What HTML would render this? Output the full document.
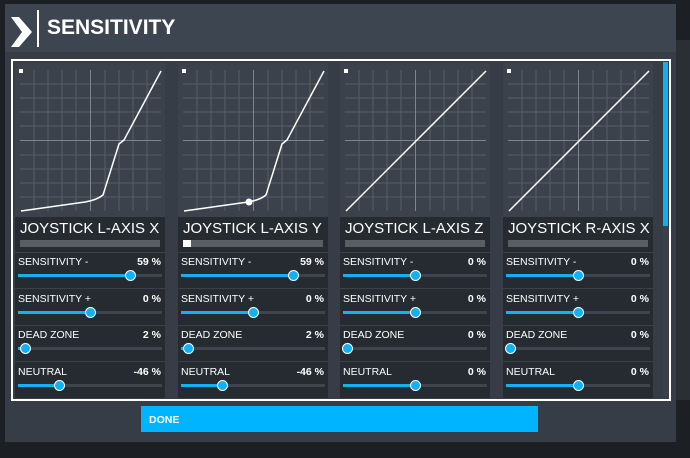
<!DOCTYPE html>
<html><head><meta charset="utf-8"><style>
*{margin:0;padding:0;box-sizing:border-box}
body{width:690px;height:458px;overflow:hidden;background:#1c2024;font-family:"Liberation Sans",sans-serif;position:relative}
.abs{position:absolute}
.dlg{left:5px;top:4px;width:671px;height:438px;background:#363d46}
.hdr{left:5px;top:4px;width:671px;height:48px;background:#3d4550}
.frame{left:11px;top:59px;width:660px;height:342px;border:2px solid #fff}
.card{top:63px;width:150px;height:335px;background:#262b31}
.graph{left:0;top:0;width:150px;height:154px;background:#3b424c}
.title{left:5px;top:157px;color:#fff;font-size:15px;white-space:nowrap}
.gbar{left:5px;top:177px;width:140px;height:7px;background:#595e65}
.sep{left:0;width:150px;height:1px;background:#3b414a}
.lbl{left:3px;color:#fff;font-size:10.5px;width:143px}
.lbl b{float:right;font-weight:bold}
.trk{left:3px;width:144px;height:3px;background:#3f454e}
.fill{left:0;top:0;height:3px;background:#12b2f2}
.knob{width:11px;height:11px;border-radius:50%;background:#12b2f2;border:1.5px solid #fff;top:-4px}
</style></head><body>
<div class="abs dlg"></div>
<div class="abs hdr"></div>
<svg class="abs" style="left:10px;top:8px" width="36" height="40"><polygon points="1,9 9,9 22,24 9,39 1,39 12,24" fill="#fff"/><rect x="27" y="2" width="2" height="37" fill="#fff"/></svg>
<div class="abs" style="left:47px;top:16px;color:#fff;font-size:21px;font-weight:bold">SENSITIVITY</div>
<div class="abs" style="left:676px;top:40px;width:14px;height:360px;background:#2a2f35"></div>
<div class="abs frame"></div>
<div class="abs" style="left:663px;top:62px;width:5px;height:335px;background:#3a414a"></div>
<div class="abs" style="left:663px;top:62px;width:5px;height:164px;background:#0fb0f0"></div>
<div class="abs" style="left:141px;top:406px;width:397px;height:26px;background:#00b4ff"></div>
<div class="abs" style="left:149px;top:414px;color:#fff;font-size:10.5px;font-weight:bold">DONE</div>

<svg width="0" height="0" style="position:absolute"><defs>
<g id="grid" stroke="#555d67" stroke-width="1">
<line x1="5" y1="21" x2="146" y2="21"/><line x1="5" y1="35" x2="146" y2="35"/><line x1="5" y1="49" x2="146" y2="49"/><line x1="5" y1="63" x2="146" y2="63"/><line x1="5" y1="92" x2="146" y2="92"/><line x1="5" y1="106" x2="146" y2="106"/><line x1="5" y1="120" x2="146" y2="120"/><line x1="5" y1="134" x2="146" y2="134"/>
<line x1="19" y1="7" x2="19" y2="148"/><line x1="33" y1="7" x2="33" y2="148"/><line x1="47" y1="7" x2="47" y2="148"/><line x1="61" y1="7" x2="61" y2="148"/><line x1="90" y1="7" x2="90" y2="148"/><line x1="104" y1="7" x2="104" y2="148"/><line x1="118" y1="7" x2="118" y2="148"/><line x1="132" y1="7" x2="132" y2="148"/>
<line x1="5" y1="77.5" x2="146" y2="77.5" stroke="#7d848d"/><line x1="75.5" y1="7" x2="75.5" y2="148" stroke="#7d848d"/>
<rect x="4" y="6" width="4" height="4" fill="#fff" stroke="none"/>
</g></defs></svg>

<!-- card 1 -->
<div class="abs card" style="left:15px">
<svg class="abs graph" width="150" height="154"><use href="#grid"/><path d="M6 148 L70 139 Q82 137 88 132 L104 81 L109 77 L146 8" fill="none" stroke="#fff" stroke-width="1.5"/></svg>
<div class="abs title">JOYSTICK L-AXIS X</div><div class="abs gbar"></div>
<div class="abs sep" style="top:189px"></div><div class="abs lbl" style="top:193px">SENSITIVITY -<b>59 %</b></div>
<div class="abs trk" style="top:211px"><div class="abs fill" style="width:112px"></div><div class="abs knob" style="left:107px"></div></div>
<div class="abs sep" style="top:225px"></div><div class="abs lbl" style="top:230px">SENSITIVITY +<b>0 %</b></div>
<div class="abs trk" style="top:248px"><div class="abs fill" style="width:72px"></div><div class="abs knob" style="left:67px"></div></div>
<div class="abs sep" style="top:262px"></div><div class="abs lbl" style="top:266px">DEAD ZONE<b>2 %</b></div>
<div class="abs trk" style="top:284px"><div class="abs fill" style="width:7px"></div><div class="abs knob" style="left:2px"></div></div>
<div class="abs sep" style="top:298px"></div><div class="abs lbl" style="top:303px">NEUTRAL<b>-46 %</b></div>
<div class="abs trk" style="top:321px"><div class="abs fill" style="width:41px"></div><div class="abs knob" style="left:36px"></div></div>
</div>
<!-- card 2 -->
<div class="abs card" style="left:178px">
<svg class="abs graph" width="150" height="154"><use href="#grid"/><path d="M6 148 L70 139 Q82 137 88 132 L104 81 L109 77 L146 8" fill="none" stroke="#fff" stroke-width="1.5"/><circle cx="71" cy="139" r="3.5" fill="#fff"/></svg>
<div class="abs title">JOYSTICK L-AXIS Y</div><div class="abs gbar"></div>
<div class="abs" style="left:5px;top:177px;width:8px;height:7px;background:#fff"></div>
<div class="abs sep" style="top:189px"></div><div class="abs lbl" style="top:193px">SENSITIVITY -<b>59 %</b></div>
<div class="abs trk" style="top:211px"><div class="abs fill" style="width:112px"></div><div class="abs knob" style="left:107px"></div></div>
<div class="abs sep" style="top:225px"></div><div class="abs lbl" style="top:230px">SENSITIVITY +<b>0 %</b></div>
<div class="abs trk" style="top:248px"><div class="abs fill" style="width:72px"></div><div class="abs knob" style="left:67px"></div></div>
<div class="abs sep" style="top:262px"></div><div class="abs lbl" style="top:266px">DEAD ZONE<b>2 %</b></div>
<div class="abs trk" style="top:284px"><div class="abs fill" style="width:7px"></div><div class="abs knob" style="left:2px"></div></div>
<div class="abs sep" style="top:298px"></div><div class="abs lbl" style="top:303px">NEUTRAL<b>-46 %</b></div>
<div class="abs trk" style="top:321px"><div class="abs fill" style="width:41px"></div><div class="abs knob" style="left:36px"></div></div>
</div>
<!-- card 3 -->
<div class="abs card" style="left:340px">
<svg class="abs graph" width="150" height="154"><use href="#grid"/><path d="M6 148 L146 8" fill="none" stroke="#fff" stroke-width="1.5"/></svg>
<div class="abs title">JOYSTICK L-AXIS Z</div><div class="abs gbar"></div>
<div class="abs sep" style="top:189px"></div><div class="abs lbl" style="top:193px">SENSITIVITY -<b>0 %</b></div>
<div class="abs trk" style="top:211px"><div class="abs fill" style="width:72px"></div><div class="abs knob" style="left:67px"></div></div>
<div class="abs sep" style="top:225px"></div><div class="abs lbl" style="top:230px">SENSITIVITY +<b>0 %</b></div>
<div class="abs trk" style="top:248px"><div class="abs fill" style="width:72px"></div><div class="abs knob" style="left:67px"></div></div>
<div class="abs sep" style="top:262px"></div><div class="abs lbl" style="top:266px">DEAD ZONE<b>0 %</b></div>
<div class="abs trk" style="top:284px"><div class="abs knob" style="left:-1px"></div></div>
<div class="abs sep" style="top:298px"></div><div class="abs lbl" style="top:303px">NEUTRAL<b>0 %</b></div>
<div class="abs trk" style="top:321px"><div class="abs fill" style="width:72px"></div><div class="abs knob" style="left:67px"></div></div>
</div>
<!-- card 4 -->
<div class="abs card" style="left:503px">
<svg class="abs graph" width="150" height="154"><use href="#grid"/><path d="M6 148 L146 8" fill="none" stroke="#fff" stroke-width="1.5"/></svg>
<div class="abs title">JOYSTICK R-AXIS X</div><div class="abs gbar"></div>
<div class="abs sep" style="top:189px"></div><div class="abs lbl" style="top:193px">SENSITIVITY -<b>0 %</b></div>
<div class="abs trk" style="top:211px"><div class="abs fill" style="width:72px"></div><div class="abs knob" style="left:67px"></div></div>
<div class="abs sep" style="top:225px"></div><div class="abs lbl" style="top:230px">SENSITIVITY +<b>0 %</b></div>
<div class="abs trk" style="top:248px"><div class="abs fill" style="width:72px"></div><div class="abs knob" style="left:67px"></div></div>
<div class="abs sep" style="top:262px"></div><div class="abs lbl" style="top:266px">DEAD ZONE<b>0 %</b></div>
<div class="abs trk" style="top:284px"><div class="abs knob" style="left:-1px"></div></div>
<div class="abs sep" style="top:298px"></div><div class="abs lbl" style="top:303px">NEUTRAL<b>0 %</b></div>
<div class="abs trk" style="top:321px"><div class="abs fill" style="width:72px"></div><div class="abs knob" style="left:67px"></div></div>
</div>
</body></html>
